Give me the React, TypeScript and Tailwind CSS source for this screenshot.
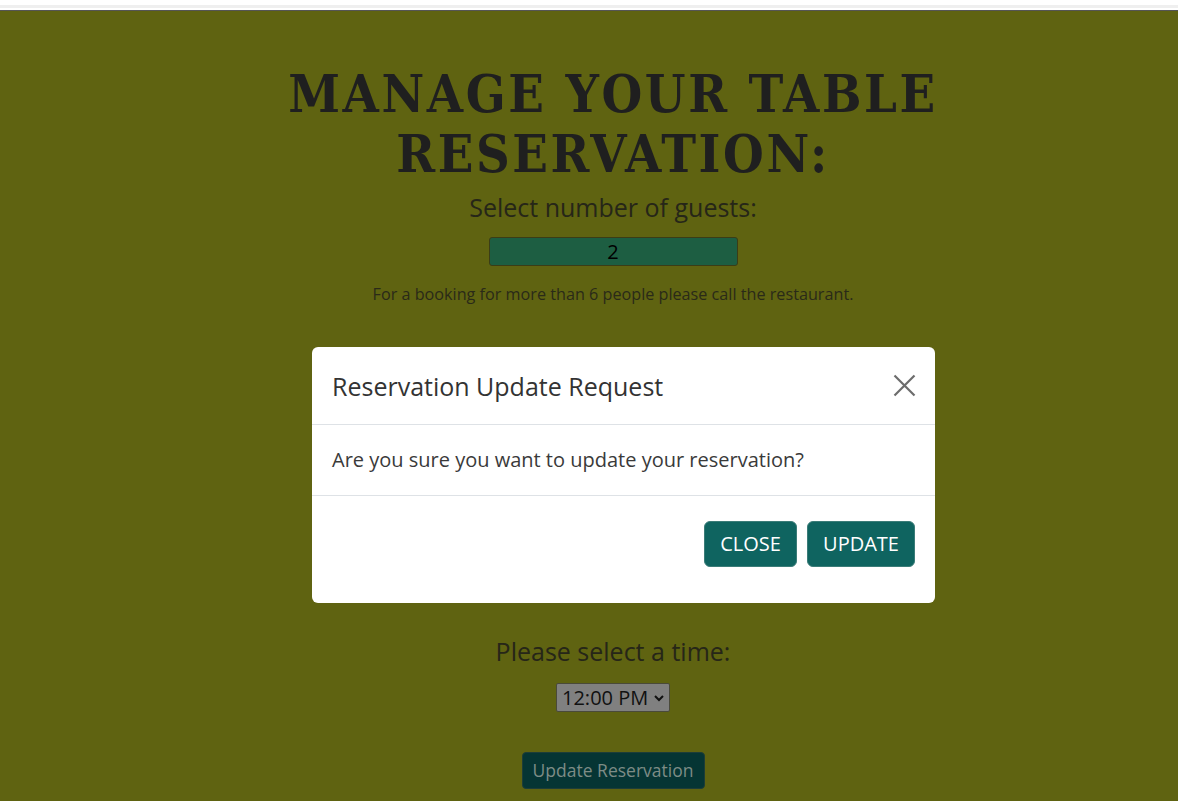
export default function App() {
  return (
    <div className="relative min-h-[801px] bg-[#5f6311] font-['Open_Sans',sans-serif]">
      {/* top nav remnant */}
      <div className="h-[11px] bg-white">
        <div className="h-[5px] bg-white" />
        <div className="h-[3px] bg-[#efefef]" />
        <div className="h-[2px] bg-white" />
        <div className="h-[1px] bg-[#555]" />
      </div>

      <main className="flex flex-col items-center pl-[48px] pt-[53px]">
        <h1 className="text-center font-['DejaVu_Serif_Condensed','Liberation_Serif',serif] text-[52px] font-bold leading-[60px] tracking-[2.6px] text-[#1f1f1f]">
          MANAGE YOUR TABLE
          <br />
          RESERVATION:
        </h1>

        <p className="mt-[5px] text-[25px] leading-[36px] text-[#262618]">Select number of guests:</p>
        <div className="mt-[12px] flex h-[29px] w-[249px] items-center justify-center rounded-[3px] border border-[#3b3d16] bg-[#1d5e42] text-[20px] text-black">
          2
        </div>
        <p className="mt-[16px] text-[16.2px] leading-[24px] text-[#2a2a18]">
          For a booking for more than 6 people please call the restaurant.
        </p>

        <div className="h-[327px]" />

        <p className="text-[25px] leading-[36px] text-[#262618]">Please select a time:</p>
        <div className="mt-[14px] flex h-[29px] w-[114px] items-center justify-between rounded-[2px] border border-[#4a4a3a] bg-[#808080] pl-[5px] pr-[4px] text-[20px] text-[#111]">
          <span>12:00 PM</span>
          <svg width="12" height="12" viewBox="0 0 12 12" fill="none" stroke="#111" strokeWidth="2">
            <path d="M2 4l4 4 4-4" />
          </svg>
        </div>
        <button className="mt-[40px] h-[37px] w-[183px] rounded-[4px] border border-[#1d3d38] bg-[#053534] text-[17.5px] text-[#7d8c86]">
          Update Reservation
        </button>
      </main>

      {/* modal */}
      <div className="absolute left-[312px] top-[347px] w-[623px] rounded-[6px] bg-white text-[#333]">
        <div className="flex h-[78px] items-center justify-between border-b border-[#dee2e6] pl-[20px] pr-[19px]">
          <h5 className="text-[25px] leading-[36px] text-[#333]">Reservation Update Request</h5>
          <svg width="23" height="23" viewBox="0 0 23 23" stroke="#6c6c6c" strokeWidth="2.2">
            <path d="M1.5 1.5l20 20M21.5 1.5l-20 20" />
          </svg>
        </div>
        <div className="flex h-[71px] items-center border-b border-[#dee2e6] px-[20px] text-[20px] text-[#3a3a3a]">
          Are you sure you want to update your reservation?
        </div>
        <div className="flex justify-end gap-[10px] pb-[36px] pr-[20px] pt-[25px]">
          <button className="h-[46px] w-[93px] rounded-[6px] border border-[#3b7c78] bg-[#0f6460] text-[20px] text-white">
            CLOSE
          </button>
          <button className="h-[46px] w-[108px] rounded-[6px] border border-[#3b7c78] bg-[#0f6460] text-[20px] text-white">
            UPDATE
          </button>
        </div>
      </div>
    </div>
  );
}
